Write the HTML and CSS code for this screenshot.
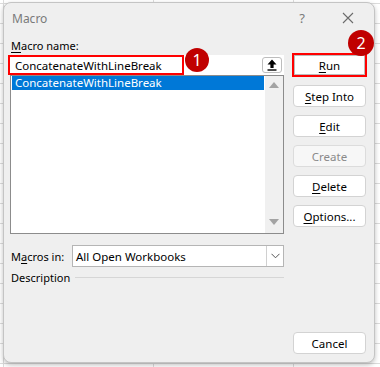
FILE: index.html
```html
<!DOCTYPE html>
<html lang="en">
<head>
    <meta charset="UTF-8">
    <title>Macro</title>
    <link rel="stylesheet" href="styles.css">
</head>
<body>
    <div class="dialog">
        <div class="titlebar">
            <span class="title">Macro</span>
            <span class="help">?</span>
            <span class="close">
                <svg width="12" height="12" viewBox="0 0 12 12"><path d="M1 1 L11 11 M11 1 L1 11" stroke="#6b6b6b" stroke-width="1.1" fill="none"/></svg>
            </span>
        </div>

        <div class="content">
            <div class="left">
                <div class="field-label"><u>M</u>acro name:</div>
                <div class="name-field">
                    <span class="name-value">ConcatenateWithLineBreak</span>
                    <button class="ref-btn">
                        <svg width="10" height="12" viewBox="0 0 10 12"><path d="M5 0.5 L9.5 5.5 H6.6 V9 H3.4 V5.5 H0.5 Z" fill="#000"/><rect x="0.5" y="10.3" width="9" height="1.4" fill="#000"/></svg>
                    </button>
                    <span class="mark-box"></span>
                    <span class="badge badge-one">1</span>
                </div>

                <div class="list">
                    <div class="items">
                        <div class="item selected">ConcatenateWithLineBreak</div>
                    </div>
                    <div class="scrollbar">
                        <span class="arrow up"></span>
                        <span class="arrow down"></span>
                    </div>
                </div>

                <div class="macros-in">
                    <span class="in-label">M<u>a</u>cros in:</span>
                    <div class="combo">
                        <span class="combo-value">All Open Workbooks</span>
                        <span class="combo-btn">
                            <svg width="9" height="6" viewBox="0 0 9 6"><path d="M0.5 0.8 L4.5 4.8 L8.5 0.8" stroke="#555" stroke-width="1" fill="none"/></svg>
                        </span>
                    </div>
                </div>

                <div class="description">
                    <span>Description</span>
                    <span class="rule"></span>
                </div>
            </div>

            <div class="right">
                <div class="run-mark">
                    <button class="btn"><u>R</u>un</button>
                    <span class="badge badge-two">2</span>
                </div>
                <button class="btn"><u>S</u>tep Into</button>
                <button class="btn"><u>E</u>dit</button>
                <button class="btn disabled">Create</button>
                <button class="btn"><u>D</u>elete</button>
                <button class="btn"><u>O</u>ptions...</button>
                <button class="btn cancel">Cancel</button>
            </div>
        </div>
    </div>
</body>
</html>
```

FILE: styles.css
```css
* {
    box-sizing: border-box;
}
body {
    margin: 0;
    width: 380px;
    height: 367px;
    overflow: hidden;
    font-family: "Noto Sans", "Open Sans", sans-serif;
    font-size: 11px;
    color: #000;
    background-color: #fff;
    background-image:
        linear-gradient(to right, transparent 3px, #dcdcdc 3px, #dcdcdc 4px, transparent 4px),
        linear-gradient(to right, transparent 153px, #dcdcdc 153px, #dcdcdc 154px, transparent 154px),
        linear-gradient(to right, transparent 293px, #dcdcdc 293px, #dcdcdc 294px, transparent 294px),
        repeating-linear-gradient(to bottom, transparent 0, transparent 3px, #dcdcdc 3px, #dcdcdc 4px, transparent 4px, transparent 20px);
}
u {
    text-decoration-thickness: 1px;
    text-underline-offset: 2px;
}
.dialog {
    width: 372px;
    height: 361px;
    margin: 2px 0 0 3px;
    background-color: #efefef;
    border: 1px solid #c4c4c4;
    border-radius: 8px;
    box-shadow: 0 2px 5px rgba(0,0,0,0.25);
    display: flex;
    flex-direction: column;
}
.titlebar {
    height: 30px;
    display: flex;
    align-items: center;
    padding-left: 8px;
}
.title {
    font-size: 12px;
    color: #7a7a7a;
    flex: 1;
}
.help {
    font-size: 13px;
    color: #7a7a7a;
    width: 46px;
    text-align: center;
}
.close {
    width: 46px;
    display: flex;
    justify-content: center;
    margin-right: 3px;
}
.content {
    flex: 1;
    display: flex;
    padding: 0 6px 8px 6px;
    gap: 8px;
}
.left {
    width: 274px;
    display: flex;
    flex-direction: column;
}
.field-label {
    height: 16px;
    line-height: 16px;
    margin-top: 5px;
    padding-left: 1px;
}
.name-field {
    position: relative;
    height: 20px;
    margin-top: 1px;
    background-color: #fff;
    display: flex;
    align-items: center;
    padding-left: 5px;
}
.name-value {
    flex: 1;
    font-size: 11.5px;
}
.ref-btn {
    width: 20px;
    height: 16px;
    margin-right: 2px;
    padding: 0;
    background-color: #fff;
    border: 1px solid #bdbdbd;
    border-radius: 3px;
    display: flex;
    align-items: center;
    justify-content: center;
}
.mark-box {
    position: absolute;
    left: -2px;
    top: 0;
    width: 176px;
    height: 20px;
    border: 2px solid #ff0000;
}
.badge {
    position: absolute;
    border-radius: 50%;
    background-color: #c00000;
    color: #fff;
    font-size: 16px;
    display: flex;
    align-items: center;
    justify-content: center;
}
.badge-one {
    left: 175px;
    top: -7px;
    width: 24px;
    height: 24px;
}
.list {
    height: 159px;
    border: 1px solid #8c8c8c;
    background-color: #fff;
    display: flex;
}
.items {
    flex: 1;
    padding: 0 1px;
}
.item {
    height: 14px;
    line-height: 14px;
    padding-left: 3px;
    font-size: 11.5px;
}
.selected {
    background-color: #0078d7;
    color: #fff;
}
.scrollbar {
    width: 18px;
    background-color: #f0f0f0;
    display: flex;
    flex-direction: column;
    justify-content: space-between;
    align-items: center;
    padding: 6px 0 8px;
}
.arrow {
    width: 0;
    height: 0;
    border-left: 5px solid transparent;
    border-right: 5px solid transparent;
}
.arrow.up {
    border-bottom: 6px solid #a3a3a3;
}
.arrow.down {
    border-top: 6px solid #a3a3a3;
}
.macros-in {
    display: flex;
    align-items: center;
    margin-top: 11px;
    height: 22px;
}
.in-label {
    width: 62px;
    padding-left: 1px;
}
.combo {
    flex: 1;
    height: 22px;
    border: 1px solid #b5b5b5;
    background-color: #fff;
    display: flex;
    align-items: center;
}
.combo-value {
    flex: 1;
    padding-left: 3px;
    font-size: 11.5px;
}
.combo-btn {
    width: 17px;
    height: 20px;
    border-left: 1px solid #d0d0d0;
    display: flex;
    align-items: center;
    justify-content: center;
}
.description {
    display: flex;
    align-items: center;
    height: 16px;
    margin-top: 2px;
    padding-left: 1px;
}
.rule {
    flex: 1;
    height: 1px;
    margin-left: 5px;
    background-color: #d6d6d6;
}
.right {
    width: 75px;
    display: flex;
    flex-direction: column;
    padding-top: 20px;
}
.run-mark {
    position: relative;
    height: 24px;
    border: 2px solid #ff0000;
    margin-bottom: 8px;
}
.run-mark .btn {
    width: 100%;
    height: 20px;
    margin: 0;
    border-color: #bcbcbc;
    border-radius: 0;
}
.badge-two {
    right: -9px;
    top: -25px;
    width: 26px;
    height: 26px;
}
.btn {
    height: 22px;
    margin: 0 1px 8px;
    padding: 0;
    font-family: inherit;
    font-size: 11.5px;
    color: #000;
    background-color: #fff;
    border: 1px solid #d3d3d3;
    border-radius: 4px;
}
.btn.disabled {
    color: #8a8a8a;
    background-color: #f7f7f7;
    border-color: #dcdcdc;
}
.btn.cancel {
    margin-top: auto;
    margin-bottom: 0;
}
```
